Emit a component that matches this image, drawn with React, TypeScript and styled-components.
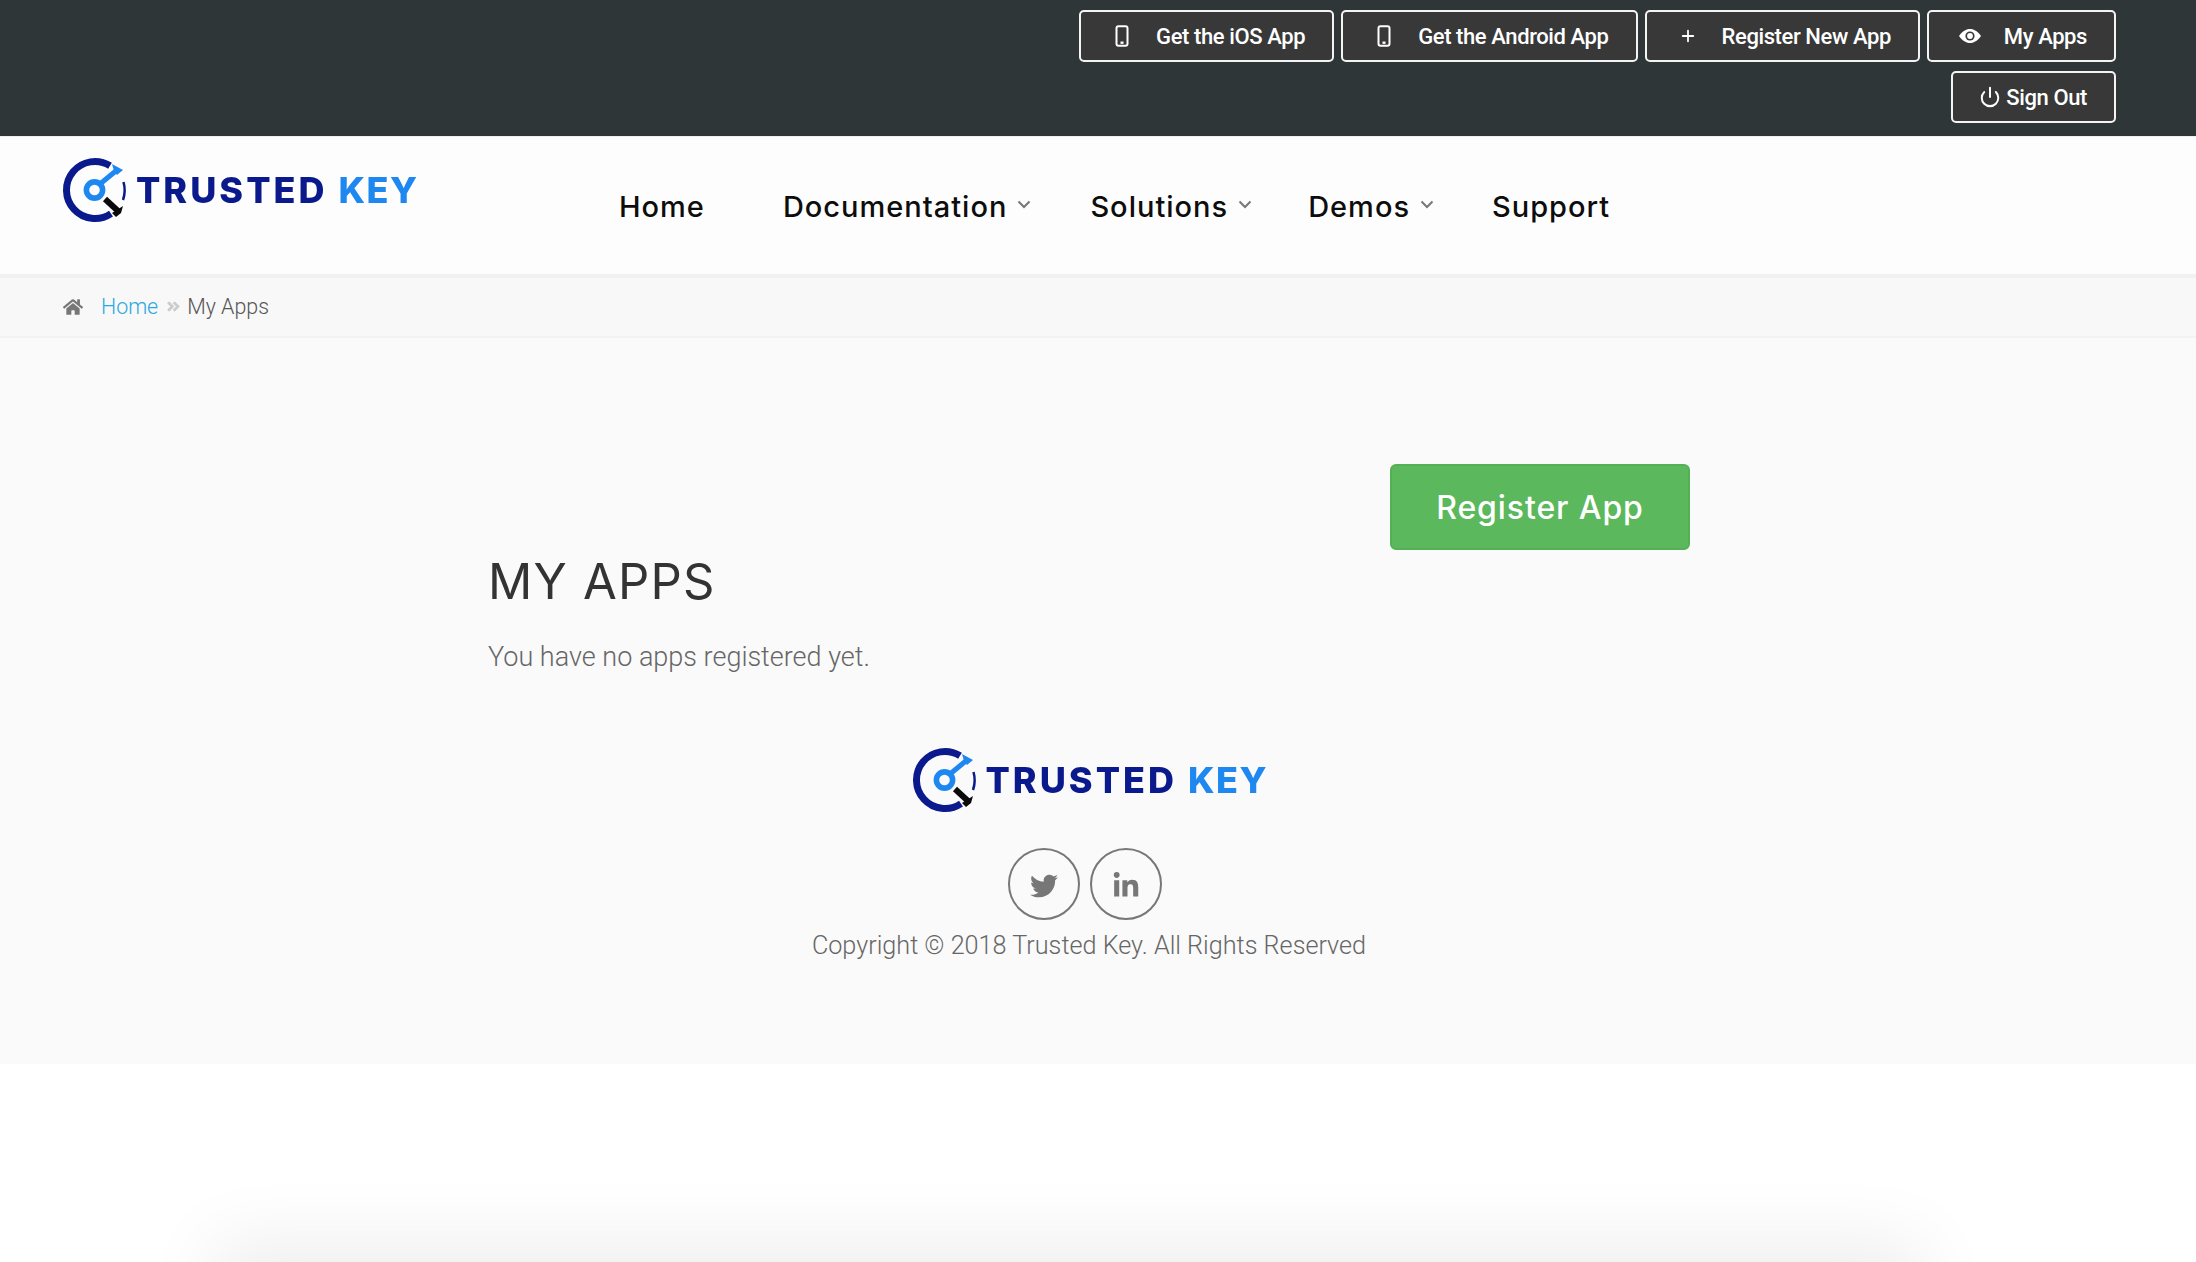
import React from 'react';
import styled, { createGlobalStyle } from 'styled-components';
import { FaHome, FaTwitter, FaLinkedinIn, FaAngleDoubleRight } from 'react-icons/fa';
import { Power, Plus } from 'lucide-react';

const Global = createGlobalStyle`
  html, body { margin: 0; padding: 0; background: #fff; }
  body { font-family: Roboto, "Liberation Sans", sans-serif; }
`;

const Page = styled.div`
  height: 1262px;
  overflow: hidden;
  background: #fff;
`;

const TopBar = styled.div`
  height: 136px;
  box-sizing: border-box;
  background: #2f3638;
  padding: 10px 80px 0 0;
  display: flex;
  flex-direction: column;
  align-items: flex-end;
  gap: 9px;
`;

const TopRow = styled.div`
  display: flex;
  gap: 7px;
`;

const TopButton = styled.a<{ $compact?: boolean }>`
  height: 52px;
  box-sizing: border-box;
  display: inline-flex;
  align-items: center;
  padding: 0 27px 0 ${p => (p.$compact ? 26 : 28)}px;
  background: #383838;
  border: 2px solid #f4f4f4;
  border-radius: 5px;
  color: #fff;
  font-size: 22px;
  font-weight: 500;
  letter-spacing: -0.4px;
  white-space: nowrap;
`;

const IconSlot = styled.span<{ $compact?: boolean }>`
  width: ${p => (p.$compact ? 22 : 26)}px;
  margin-right: ${p => (p.$compact ? 5 : 21)}px;
  display: inline-flex;
  justify-content: center;
  align-items: center;
`;

const Header = styled.header`
  height: 138px;
  box-sizing: border-box;
  background: #fdfdfd;
  border-top: 1px solid #eee;
  padding: 21px 0 0 63px;
  display: flex;
  align-items: flex-start;
`;

const LogoWrap = styled.div`
  flex: none;
  display: flex;
  align-items: center;
  width: 353px;
  height: 64px;
  filter: blur(0.5px);
`;

const LogoSvg = styled.svg`
  flex: none;
`;

const LogoText = styled.span`
  margin-left: 9px;
  font-family: Inter, "Liberation Sans", sans-serif;
  font-weight: 800;
  font-size: 36px;
  line-height: 64px;
  letter-spacing: 3px;
  color: #0a1a8c;
  white-space: nowrap;
`;

const LogoAccent = styled.span`
  color: #1e88f0;
  margin-left: 11px;
  letter-spacing: 1.5px;
`;

const Nav = styled.nav`
  margin-left: 203px;
  padding-top: 32px;
  display: flex;
  gap: 59px;
`;

const NavItem = styled.a<{ $extra?: number }>`
  display: inline-flex;
  align-items: center;
  margin-right: ${p => p.$extra ?? 0}px;
  font-family: Inter, "Liberation Sans", sans-serif;
  font-weight: 500;
  font-size: 29px;
  line-height: 34px;
  letter-spacing: 1px;
  color: #0d0d0d;
  white-space: nowrap;
`;

const Caret = styled.svg`
  margin: -6px 0 0 10px;
`;

const Crumbs = styled.div`
  height: 64px;
  box-sizing: border-box;
  background: #f8f8f8;
  border-top: 4px solid #f1f1f1;
  border-bottom: 2px solid #f3f3f3;
  padding: 0 0 1px 63px;
  display: flex;
  align-items: center;
  font-size: 21.4px;
  font-weight: 300;
  color: #555;
`;

const CrumbHome = styled(FaHome)`
  color: #777;
  width: 20px;
  height: 20px;
  margin-right: 18px;
`;

const CrumbLink = styled.a`
  color: #29a9df;
`;

const CrumbSep = styled(FaAngleDoubleRight)`
  color: #ccc;
  width: 13px;
  height: 17px;
  margin: 0 7px 0 9px;
  stroke: #ccc;
  stroke-width: 22px;
`;

const Main = styled.main`
  background: #fafafa;
  height: 726px;
  box-sizing: border-box;
  padding: 126px 0 0 488px;
`;

const Container = styled.div`
  width: 1202px;
`;

const ActionRow = styled.div`
  display: flex;
  justify-content: flex-end;
`;

const RegisterButton = styled.a`
  width: 300px;
  height: 86px;
  box-sizing: border-box;
  display: flex;
  align-items: center;
  justify-content: center;
  background: #5cb85c;
  border: 2px solid #54b054;
  border-radius: 6px;
  color: #fff;
  font-family: Inter, "Liberation Sans", sans-serif;
  font-weight: 500;
  font-size: 32px;
  letter-spacing: 0.9px;
`;

const Title = styled.h1`
  margin: 2px 0 0;
  font-family: Inter, "Liberation Sans", sans-serif;
  font-weight: 400;
  font-size: 49px;
  line-height: 60px;
  letter-spacing: 1.2px;
  color: #333;
`;

const Lead = styled.p`
  margin: 25px 0 0;
  font-weight: 300;
  font-size: 27px;
  line-height: 40px;
  color: #666;
`;

const Footer = styled.footer`
  margin-top: 71px;
  display: flex;
  flex-direction: column;
  align-items: center;
`;

const Socials = styled.div`
  margin: 36px 8px 0 0;
  display: flex;
  gap: 10px;
`;

const Social = styled.a`
  width: 72px;
  height: 72px;
  box-sizing: border-box;
  border: 2px solid #777;
  border-radius: 50%;
  padding-top: 3px;
  display: flex;
  align-items: center;
  justify-content: center;
  color: #777;
`;

const Copyright = styled.div`
  margin-top: 6px;
  font-weight: 300;
  font-size: 25.2px;
  line-height: 40px;
  color: #666;
`;

const Blank = styled.div`
  height: 198px;
  background: #fff;
`;

const Shade = styled.div`
  margin: 0 273px 0 213px;
  height: 100px;
  box-shadow: 0 -20px 75px rgba(0, 0, 0, 0.07);
`;

const PhoneIcon = () => (
  <svg width="14" height="22" viewBox="0 0 14 22" fill="none">
    <rect x="1.5" y="1.2" width="11" height="19.6" rx="2" stroke="#fff" strokeWidth="2" />
    <rect x="5.5" y="16.5" width="3" height="2.4" fill="#fff" />
  </svg>
);

const EyeIcon = () => (
  <svg width="22" height="14" viewBox="0 0 22 14">
    <path d="M0 7 C4 1.5 8 0 11 0 C14 0 18 1.5 22 7 C18 12.5 14 14 11 14 C8 14 4 12.5 0 7 Z" fill="#fff" />
    <circle cx="11" cy="7" r="4.6" fill="#383838" />
    <circle cx="11" cy="7" r="2.9" fill="#fff" />
  </svg>
);

const LogoMark = () => (
  <LogoSvg width="64" height="64" viewBox="8 8 64 64" fill="none" overflow="visible">
    <path d="M55 15.8 A28.5 28.5 0 1 0 56 63.6" stroke="#0a1a8c" strokeWidth="7" />
    <path d="M68.5 32 A30 30 0 0 1 68 50" stroke="#0a1a8c" strokeWidth="2.5" />
    <circle cx="39.5" cy="40" r="8.1" stroke="#1e88f0" strokeWidth="5.6" />
    <path d="M45 34 L62 20" stroke="#1e88f0" strokeWidth="5" />
    <path d="M57 14 L68 20 L62 25 L59 21 Z" fill="#1e88f0" />
    <path d="M50 49 L63 61" stroke="#0a0a0a" strokeWidth="6" />
    <path d="M57 63 L68 56 L66 63 L61 67 Z" fill="#0a0a0a" />
  </LogoSvg>
);

const Logo = () => (
  <LogoWrap>
    <LogoMark />
    <LogoText>
      TRUSTED<LogoAccent>KEY</LogoAccent>
    </LogoText>
  </LogoWrap>
);

const Chevron = () => (
  <Caret width="14" height="9" viewBox="0 0 14 9" fill="none">
    <path d="M1.5 1.5 L7 7 L12.5 1.5" stroke="#777" strokeWidth="2" />
  </Caret>
);

export default function App() {
  return (
    <Page>
      <Global />
      <TopBar>
        <TopRow>
          <TopButton><IconSlot><PhoneIcon /></IconSlot>Get the iOS App</TopButton>
          <TopButton><IconSlot><PhoneIcon /></IconSlot>Get the Android App</TopButton>
          <TopButton><IconSlot><Plus size={18} strokeWidth={2.4} color="#fff" /></IconSlot>Register New App</TopButton>
          <TopButton><IconSlot><EyeIcon /></IconSlot>My Apps</TopButton>
        </TopRow>
        <TopRow>
          <TopButton $compact><IconSlot $compact><Power size={26} strokeWidth={2.2} color="#fff" /></IconSlot>Sign Out</TopButton>
        </TopRow>
      </TopBar>
      <Header>
        <Logo />
        <Nav>
          <NavItem $extra={19}>Home</NavItem>
          <NavItem>Documentation<Chevron /></NavItem>
          <NavItem $extra={-3}>Solutions<Chevron /></NavItem>
          <NavItem $extra={-1}>Demos<Chevron /></NavItem>
          <NavItem>Support</NavItem>
        </Nav>
      </Header>
      <Crumbs>
        <CrumbHome />
        <CrumbLink>Home</CrumbLink>
        <CrumbSep />
        <span>My Apps</span>
      </Crumbs>
      <Main>
        <Container>
          <ActionRow><RegisterButton>Register App</RegisterButton></ActionRow>
          <Title>MY APPS</Title>
          <Lead>You have no apps registered yet.</Lead>
          <Footer>
            <Logo />
            <Socials>
              <Social><FaTwitter size={28} /></Social>
              <Social><FaLinkedinIn size={28} /></Social>
            </Socials>
            <Copyright>Copyright © 2018 Trusted Key. All Rights Reserved</Copyright>
          </Footer>
        </Container>
      </Main>
      <Blank />
      <Shade />
    </Page>
  );
}
